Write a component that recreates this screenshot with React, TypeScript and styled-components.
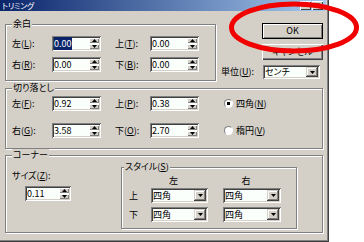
import React from "react";
import styled, { createGlobalStyle } from "styled-components";

const FACE = "#d4d0c8";
const HILITE = "#ffffff";
const SHADOW = "#808080";
const DKSHADOW = "#404040";
const UI_FONT = `"Noto Sans CJK JP", "Noto Sans", sans-serif`;

const GlobalStyle = createGlobalStyle`
  html, body { margin: 0; padding: 0; background: #ffffff; }
  body { font-family: ${UI_FONT}; }
`;

const Stage = styled.div`
  position: relative;
  width: 364px;
  height: 242px;
  overflow: hidden;
  background: #ffffff;
`;

const Window = styled.div`
  width: 329px;
  height: 242px;
  box-sizing: border-box;
  padding: 0 3px 0 0;
  background: ${FACE};
  box-shadow: inset -1px -1px 0 ${DKSHADOW}, inset -2px -2px 0 ${SHADOW};
  font-family: ${UI_FONT};
  font-size: 9px;
  line-height: 12px;
  color: #000;
  font-feature-settings: "palt";
`;

const TitleBar = styled.div`
  height: 11px;
  display: flex;
  align-items: center;
  justify-content: space-between;
  padding: 0 3px 0 2px;
  background: linear-gradient(90deg, #0a246a 0%, #a6caf0 100%);
`;

const TitleText = styled.span`
  color: #ffffff;
  font-size: 8px;
  line-height: 11px;
  letter-spacing: -0.4px;
  white-space: nowrap;
`;

const CaptionButtons = styled.div`
  display: flex;
  gap: 1px;
`;

const CaptionButton = styled.span`
  width: 11px;
  height: 9px;
  box-sizing: border-box;
  background: ${FACE};
  box-shadow: inset 1px 1px 0 ${HILITE}, inset -1px -1px 0 ${DKSHADOW};
  display: flex;
  align-items: center;
  justify-content: center;
  font: bold 7px/9px "DejaVu Sans", sans-serif;
  color: #000;
`;

const Body = styled.div`
  padding: 12px 3px 0 5px;
  display: flex;
  flex-direction: column;
`;

const TopRow = styled.div`
  display: flex;
  justify-content: space-between;
  align-items: flex-start;
`;

const Group = styled.div<{ $w?: number; $mt?: number; $pad: string }>`
  position: relative;
  box-sizing: border-box;
  flex: none;
  ${(p) => (p.$w ? `width: ${p.$w}px;` : "")}
  margin-top: ${(p) => p.$mt ?? 0}px;
  padding: ${(p) => p.$pad};
  border: 1px solid ${SHADOW};
  box-shadow: inset 1px 1px 0 ${HILITE}, 1px 1px 0 ${HILITE};
`;

const Legend = styled.span<{ $left: number }>`
  position: absolute;
  top: -7px;
  left: ${(p) => p.$left}px;
  padding: 0 1px;
  background: ${FACE};
  line-height: 12px;
  white-space: nowrap;
`;

const FieldRows = styled.div<{ $gap: number }>`
  display: flex;
  flex-direction: column;
  gap: ${(p) => p.$gap}px;
`;

const FieldRow = styled.div`
  display: flex;
  align-items: center;
  gap: 14px;
`;

const Field = styled.div`
  display: flex;
  align-items: center;
`;

const FieldLabel = styled.span<{ $w?: number }>`
  ${(p) => (p.$w ? `width: ${p.$w}px;` : "")}
  flex: none;
  white-space: nowrap;
  line-height: 12px;
`;

const Sunken = styled.div<{ $w: number; $h?: number; $ml?: number; $mt?: number }>`
  width: ${(p) => p.$w}px;
  height: ${(p) => p.$h ?? 15}px;
  margin-left: ${(p) => p.$ml ?? 0}px;
  margin-top: ${(p) => p.$mt ?? 0}px;
  box-sizing: border-box;
  flex: none;
  padding: 2px;
  background: #fbfffb;
  box-shadow: inset 1px 1px 0 ${SHADOW}, inset -1px -1px 0 ${HILITE},
    inset 2px 2px 0 ${DKSHADOW}, inset -2px -2px 0 ${FACE};
  display: flex;
  align-items: stretch;
`;

const FieldText = styled.span`
  flex: 1;
  min-width: 0;
  align-self: center;
  white-space: nowrap;
  font-size: 9px;
  line-height: 10px;
`;

const Selected = styled.span`
  background: #0a246a;
  color: #ffffff;
`;

const SpinButtons = styled.div`
  width: 10px;
  flex: none;
  display: flex;
  flex-direction: column;
  gap: 1px;
`;

const SpinButton = styled.span`
  flex: 1;
  background: ${FACE};
  box-shadow: inset 1px 1px 0 ${HILITE}, inset -1px -1px 0 ${SHADOW};
  display: flex;
  align-items: center;
  justify-content: center;
`;

const DropButton = styled.span`
  width: 12px;
  flex: none;
  background: ${FACE};
  box-shadow: inset -1px -1px 0 ${DKSHADOW}, inset 1px 1px 0 ${FACE},
    inset -2px -2px 0 ${SHADOW}, inset 2px 2px 0 ${HILITE};
  display: flex;
  align-items: center;
  justify-content: center;
`;

const RadioOption = styled.div`
  display: flex;
  align-items: center;
  gap: 3px;
  margin-left: 11px;
  white-space: nowrap;
`;

const RadioDot = styled.span<{ $on?: boolean }>`
  width: 9px;
  height: 9px;
  box-sizing: border-box;
  flex: none;
  border-radius: 50%;
  border: 1px solid;
  border-color: ${SHADOW} ${HILITE} ${HILITE} ${SHADOW};
  background: ${(p) =>
    p.$on ? "radial-gradient(circle, #000 0 1.5px, #fff 2px)" : "#fff"};
`;

const SideColumn = styled.div`
  width: 102px;
  display: flex;
  flex-direction: column;
  align-items: flex-end;
`;

const PushButton = styled.button<{ $default?: boolean; $mt?: number }>`
  width: 61px;
  height: 16px;
  margin: ${(p) => p.$mt ?? 0}px 0 0 0;
  padding: 0;
  border: none;
  background: ${FACE};
  font-family: ${UI_FONT};
  font-size: 9px;
  line-height: 12px;
  color: #000;
  font-feature-settings: "palt";
  box-shadow: ${(p) =>
    p.$default
      ? `inset 0 0 0 1px #000, inset 2px 2px 0 ${HILITE}, inset -2px -2px 0 ${SHADOW}`
      : `inset 1px 1px 0 ${HILITE}, inset -1px -1px 0 ${DKSHADOW}, inset -2px -2px 0 ${SHADOW}`};
`;

const UnitRow = styled.div`
  display: flex;
  align-items: center;
  margin: 5px 3px 0 0;
  width: 99px;
`;

const CornerLayout = styled.div`
  display: flex;
  align-items: flex-start;
`;

const SizeColumn = styled.div`
  width: 109px;
  flex: none;
  padding-top: 3px;
  display: flex;
  flex-direction: column;
  align-items: flex-start;
`;

const StyleRow = styled.div<{ $mt?: number }>`
  display: grid;
  grid-template-columns: 22px 57px 73px;
  align-items: center;
  margin-top: ${(p) => p.$mt ?? 0}px;
`;

const ColumnHead = styled.span<{ $right?: boolean }>`
  width: ${(p) => (p.$right ? 58 : 57)}px;
  box-sizing: border-box;
  padding-right: 12px;
  text-align: center;
  line-height: 12px;
  justify-self: ${(p) => (p.$right ? "end" : "start")};
`;

const StyleSelectCell = styled.div<{ $right?: boolean }>`
  justify-self: ${(p) => (p.$right ? "end" : "start")};
`;

const Annotation = styled.svg`
  position: absolute;
  left: 0;
  top: 0;
  pointer-events: none;
`;

const Arrow = ({ up }: { up?: boolean }) => (
  <svg width="5" height="3" viewBox="0 0 5 3">
    <polygon points={up ? "0,3 2.5,0 5,3" : "0,0 5,0 2.5,3"} fill="#000" />
  </svg>
);

const SpinBox = ({ value, w = 49, selected, ml, mt }: { value: string; w?: number; selected?: boolean; ml?: number; mt?: number }) => (
  <Sunken $w={w} $ml={ml} $mt={mt}>
    <FieldText>{selected ? <Selected>{value}</Selected> : value}</FieldText>
    <SpinButtons>
      <SpinButton><Arrow up /></SpinButton>
      <SpinButton><Arrow /></SpinButton>
    </SpinButtons>
  </Sunken>
);

const ComboBox = ({ value, w, h }: { value: string; w: number; h?: number }) => (
  <Sunken $w={w} $h={h}>
    <FieldText>{value}</FieldText>
    <DropButton><Arrow /></DropButton>
  </Sunken>
);

export default function App() {
  return (
    <Stage>
      <GlobalStyle />
      <Window>
        <TitleBar>
          <TitleText>トリミング</TitleText>
          <CaptionButtons>
            <CaptionButton>?</CaptionButton>
            <CaptionButton>×</CaptionButton>
          </CaptionButtons>
        </TitleBar>
        <Body>
          <TopRow>
            <Group $w={211} $mt={1} $pad="11px 0 8px 6px">
              <Legend $left={6}>余白</Legend>
              <FieldRows $gap={6}>
                <FieldRow>
                  <Field>
                    <FieldLabel $w={40}>左(<u>L</u>):</FieldLabel>
                    <SpinBox value="0.00" selected />
                  </Field>
                  <Field>
                    <FieldLabel $w={35}>上(<u>T</u>):</FieldLabel>
                    <SpinBox value="0.00" />
                  </Field>
                </FieldRow>
                <FieldRow>
                  <Field>
                    <FieldLabel $w={40}>右(<u>R</u>):</FieldLabel>
                    <SpinBox value="0.00" />
                  </Field>
                  <Field>
                    <FieldLabel $w={35}>下(<u>B</u>):</FieldLabel>
                    <SpinBox value="0.00" />
                  </Field>
                </FieldRow>
              </FieldRows>
            </Group>
            <SideColumn>
              <PushButton $default>OK</PushButton>
              <PushButton $mt={5}>キャンセル</PushButton>
              <UnitRow>
                <FieldLabel $w={42}>単位(<u>U</u>):</FieldLabel>
                <ComboBox value="センチ" w={57} h={14} />
              </UnitRow>
            </SideColumn>
          </TopRow>

          <Group $mt={7} $pad="7px 0 10px 6px">
            <Legend $left={6}>切り落とし</Legend>
            <FieldRows $gap={12}>
              <FieldRow>
                <Field>
                  <FieldLabel $w={40}>左(<u>F</u>):</FieldLabel>
                  <SpinBox value="0.92" />
                </Field>
                <Field>
                  <FieldLabel $w={35}>上(<u>P</u>):</FieldLabel>
                  <SpinBox value="0.38" />
                </Field>
                <RadioOption>
                  <RadioDot $on />
                  <span>四角(<u>N</u>)</span>
                </RadioOption>
              </FieldRow>
              <FieldRow>
                <Field>
                  <FieldLabel $w={40}>右(<u>G</u>):</FieldLabel>
                  <SpinBox value="3.58" />
                </Field>
                <Field>
                  <FieldLabel $w={35}>下(<u>O</u>):</FieldLabel>
                  <SpinBox value="2.70" />
                </Field>
                <RadioOption>
                  <RadioDot />
                  <span>楕円(<u>V</u>)</span>
                </RadioOption>
              </FieldRow>
            </FieldRows>
          </Group>

          <Group $mt={6} $pad="11px 0 3px 6px">
            <Legend $left={6}>コーナー</Legend>
            <CornerLayout>
              <SizeColumn>
                <FieldLabel>サイズ(<u>Z</u>):</FieldLabel>
                <SpinBox value="0.11" w={46} ml={13} mt={4} />
              </SizeColumn>
              <Group $w={176} $pad="7px 0 6px 7px">
                <Legend $left={2}>スタイル(<u>S</u>)</Legend>
                <StyleRow>
                  <span />
                  <ColumnHead>左</ColumnHead>
                  <ColumnHead $right>右</ColumnHead>
                </StyleRow>
                <StyleRow $mt={1}>
                  <FieldLabel>上</FieldLabel>
                  <StyleSelectCell><ComboBox value="四角" w={57} /></StyleSelectCell>
                  <StyleSelectCell $right><ComboBox value="四角" w={58} /></StyleSelectCell>
                </StyleRow>
                <StyleRow $mt={4}>
                  <FieldLabel>下</FieldLabel>
                  <StyleSelectCell><ComboBox value="四角" w={57} /></StyleSelectCell>
                  <StyleSelectCell $right><ComboBox value="四角" w={58} /></StyleSelectCell>
                </StyleRow>
              </Group>
            </CornerLayout>
          </Group>
        </Body>
      </Window>
      <Annotation width={364} height={242} viewBox="0 0 364 242">
        <ellipse
          cx="294"
          cy="27.5"
          rx="62.5"
          ry="23.5"
          fill="none"
          stroke="#f20000"
          strokeWidth="5"
        />
      </Annotation>
    </Stage>
  );
}
